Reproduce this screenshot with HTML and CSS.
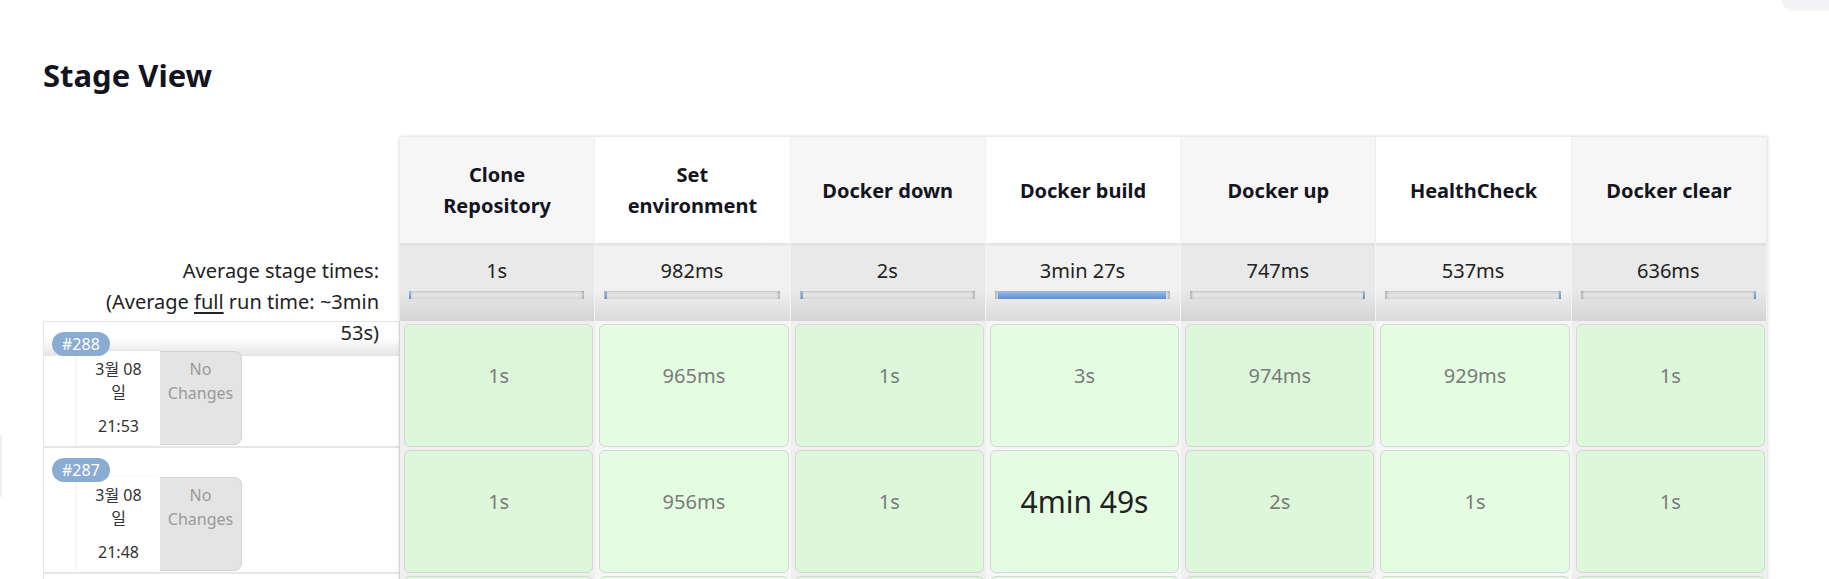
FILE: index.html
```html
<!DOCTYPE html>
<html lang="ko">
<head>
<meta charset="utf-8">
<title>Stage View</title>
<link rel="stylesheet" href="styles.css">
</head>
<body>
<div class="edge-tab"></div>
<div class="edge-line"></div>
<div class="page">
  <h2 class="title">Stage View</h2>
  <div class="stage-view">
    <div class="builds">
      <div class="builds-head">
        <div class="avg-label">Average stage times:<br>(Average <u>full</u> run time: ~3min<br>53s)</div>
      </div>
      <div class="build shaded">
        <span class="badge">#288</span>
        <div class="build-body">
          <div class="start"><div class="date">3월 08<br>일</div><div class="time">21:53</div></div>
          <div class="changes">No<br>Changes</div>
        </div>
      </div>
      <div class="build">
        <span class="badge">#287</span>
        <div class="build-body">
          <div class="start"><div class="date">3월 08<br>일</div><div class="time">21:48</div></div>
          <div class="changes">No<br>Changes</div>
        </div>
      </div>
      <div class="build shaded"></div>
    </div>

    <div class="stages">
      <div class="sh">Clone Repository</div>
      <div class="sh alt">Set environment</div>
      <div class="sh">Docker down</div>
      <div class="sh alt">Docker build</div>
      <div class="sh">Docker up</div>
      <div class="sh alt">HealthCheck</div>
      <div class="sh">Docker clear</div>

      <div class="sa">1s<div class="bar"><div class="fill" style="margin-left:0%;width:0.6%"></div></div></div>
      <div class="sa alt">982ms<div class="bar"><div class="fill" style="margin-left:0.5%;width:0.6%"></div></div></div>
      <div class="sa">2s<div class="bar"><div class="fill" style="margin-left:1%;width:0.8%"></div></div></div>
      <div class="sa alt">3min 27s<div class="bar"><div class="fill" style="margin-left:2%;width:95.5%"></div></div></div>
      <div class="sa">747ms<div class="bar"><div class="fill" style="margin-left:98.6%;width:0.8%"></div></div></div>
      <div class="sa alt">537ms<div class="bar"><div class="fill" style="margin-left:98.8%;width:0.6%"></div></div></div>
      <div class="sa">636ms<div class="bar"><div class="fill" style="margin-left:99%;width:0.6%"></div></div></div>

      <div class="sc"><div class="box">1s</div></div>
      <div class="sc alt"><div class="box">965ms</div></div>
      <div class="sc"><div class="box">1s</div></div>
      <div class="sc alt"><div class="box">3s</div></div>
      <div class="sc"><div class="box">974ms</div></div>
      <div class="sc alt"><div class="box">929ms</div></div>
      <div class="sc"><div class="box">1s</div></div>

      <div class="sc"><div class="box">1s</div></div>
      <div class="sc alt"><div class="box">956ms</div></div>
      <div class="sc"><div class="box">1s</div></div>
      <div class="sc alt"><div class="box big">4min 49s</div></div>
      <div class="sc"><div class="box">2s</div></div>
      <div class="sc alt"><div class="box">1s</div></div>
      <div class="sc"><div class="box">1s</div></div>

      <div class="sc"><div class="box"></div></div>
      <div class="sc alt"><div class="box"></div></div>
      <div class="sc"><div class="box"></div></div>
      <div class="sc alt"><div class="box"></div></div>
      <div class="sc"><div class="box"></div></div>
      <div class="sc alt"><div class="box"></div></div>
      <div class="sc"><div class="box"></div></div>
    </div>
  </div>
</div>
</body>
</html>
```
FILE: styles.css
```css
html {
  overflow: hidden;
}
body {
  margin: 0;
  background: #fff;
  color: #14141f;
  font-family: "Noto Sans", "Noto Sans CJK KR", sans-serif;
}
.edge-tab {
  position: absolute;
  top: 0;
  right: 0;
  width: 47px;
  height: 11px;
  background: #f4f4f6;
  border-bottom-left-radius: 10px;
}
.edge-line {
  position: absolute;
  left: 0;
  top: 435px;
  width: 2px;
  height: 62px;
  background: #efefef;
}
.page {
  padding: 54px 0 0 43px;
}
.title {
  margin: 0 0 41px;
  font-size: 31px;
  line-height: 42px;
  font-weight: 700;
}
.stage-view {
  display: flex;
  align-items: flex-start;
}
.builds {
  width: 357px;
  flex: none;
}
.builds-head {
  height: 184px;
  box-sizing: border-box;
  padding: 118px 21px 0 0;
  text-align: right;
  font-size: 20px;
  line-height: 31px;
  color: #222;
}
.avg-label u {
  text-underline-offset: 3px;
}
.build {
  height: 126px;
  box-sizing: border-box;
  border: 1px solid #e6e6e6;
  padding: 10px 0 0 8px;
  background: #fff;
}
.build.shaded {
  background: linear-gradient(#fff 0, #fff 16px, #e4e4e4 34px, #fff 34px);
}
.badge {
  display: inline-block;
  position: relative;
  z-index: 1;
  height: 24px;
  line-height: 24px;
  padding: 0 10px;
  border-radius: 12px;
  background: #8aabd2;
  color: #fff;
  font-size: 16px;
}
.build-body {
  display: flex;
  height: 94px;
  margin: -5px 0 0 25px;
}
.start {
  width: 83px;
  box-sizing: border-box;
  padding-top: 7px;
  background: #fff;
  text-align: center;
  font-size: 16px;
  color: #333;
  box-shadow: -1px 0 2px rgba(0, 0, 0, 0.08);
}
.date {
  line-height: 23px;
}
.time {
  margin-top: 11px;
  line-height: 23px;
}
.changes {
  width: 82px;
  box-sizing: border-box;
  padding-top: 5px;
  background: #e4e4e4;
  border: 1px solid #d2d2d2;
  border-left: none;
  border-radius: 0 8px 8px 0;
  text-align: center;
  color: #9a9a9a;
  font-size: 16px;
  line-height: 24px;
}
.stages {
  width: 1367px;
  flex: none;
  display: grid;
  grid-template-columns: repeat(7, 1fr);
  box-shadow: 0 0 4px rgba(0, 0, 0, 0.2);
}
.sh {
  height: 106px;
  box-sizing: border-box;
  padding: 0 25px;
  display: flex;
  align-items: center;
  justify-content: center;
  text-align: center;
  background: #f6f6f6;
  border-right: 1px solid #efefef;
  font-weight: 700;
  font-size: 20px;
  line-height: 31px;
  color: #14141f;
}
.sh.alt {
  background: #fff;
}
.sa {
  height: 78px;
  box-sizing: border-box;
  padding: 13px 10px 0 9px;
  text-align: center;
  font-size: 20px;
  line-height: 30px;
  color: #222;
  border-right: 1px solid #f3f3f3;
  background: linear-gradient(#dcdcdc 0, #e9e9e9 4px, #e9e9e9 60%, #d4d4d4 100%);
}
.sa.alt {
  background: linear-gradient(#e2e2e2 0, #f1f1f1 4px, #f1f1f1 60%, #dadada 100%);
}
.bar {
  display: flex;
  height: 8px;
  margin-top: 5px;
  background: linear-gradient(#cdcdcd, #e6e6e6 45%, #d8d8d8);
  box-shadow: inset 3px 0 2px -1px rgba(0, 0, 0, 0.18), inset -3px 0 2px -1px rgba(0, 0, 0, 0.18);
}
.fill {
  height: 100%;
  min-width: 2px;
  background: linear-gradient(#9dbde8, #5e8ed3);
}
.sc {
  height: 126px;
  box-sizing: border-box;
  padding: 3px 2px 0 4px;
  background: #efefef;
}
.sc.alt {
  background: #f6f6f6;
}
.box {
  height: 123px;
  box-sizing: border-box;
  padding-top: 36px;
  border: 1px solid #d6d6d6;
  border-radius: 6px;
  background: #ddf7db;
  text-align: center;
  font-size: 20px;
  line-height: 30px;
  color: #7b7b7b;
}
.alt .box {
  background: #e4fde2;
}
.box.big {
  font-size: 30px;
  color: #222;
}
```
